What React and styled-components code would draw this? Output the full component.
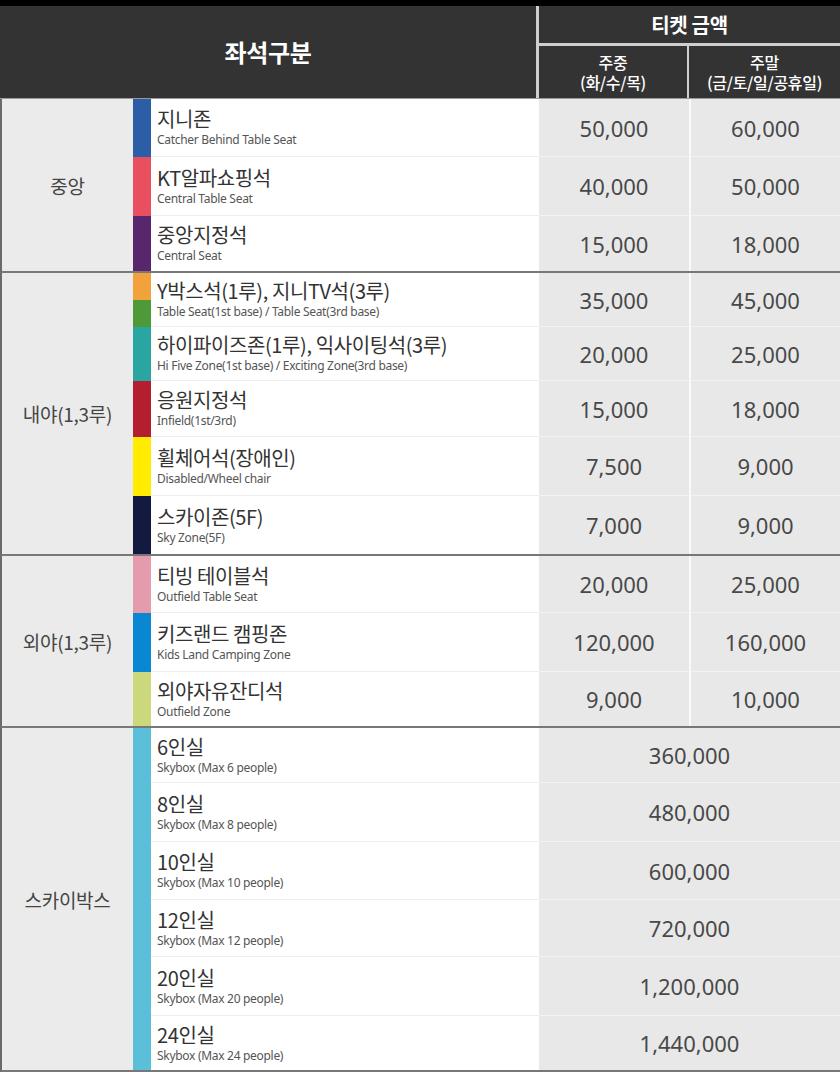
import React from 'react';
import styled, { createGlobalStyle } from 'styled-components';

const GlobalStyle = createGlobalStyle`
  html, body {
    margin: 0;
    padding: 0;
    background: #000;
  }
  body {
    font-family: "Noto Sans", "Noto Sans CJK KR", sans-serif;
  }
`;

const Page = styled.div`
  width: 840px;
  padding-top: 6px;
  background: #000;
`;

/* header */
const Header = styled.div`
  display: grid;
  grid-template-columns: 536px 1fr;
  gap: 3px;
  background: #cfcfcf;
  border-bottom: 1px solid #9a9a9a;
`;

const HeaderCell = styled.div`
  background: #333;
  color: #fff;
  display: flex;
  flex-direction: column;
  align-items: center;
  justify-content: center;
  text-align: center;
  font-family: "Noto Sans CJK KR", sans-serif;
  font-weight: ${(p) => p.weight || 700};
  font-size: ${(p) => p.size || 16}px;
  line-height: 1.2;
  letter-spacing: -0.3px;
  height: ${(p) => p.h}px;
`;

const HeadLine = styled.span`
  display: block;
  line-height: 20px;
  height: 20px;
  overflow: visible;
`;

const HeaderRight = styled.div`
  display: flex;
  flex-direction: column;
  gap: 3px;
`;

const SubHeads = styled.div`
  display: grid;
  grid-template-columns: 148px 1fr;
  gap: 2px;
`;

/* body */
const Group = styled.div`
  display: flex;
  border-left: 2px solid #6a6a6a;
  border-bottom: 2px solid #787878;
  background: #fff;
`;

const GroupLabel = styled.div`
  width: 131px;
  flex-shrink: 0;
  background: #ebebeb;
  display: flex;
  align-items: center;
  justify-content: center;
  font-family: "Noto Sans CJK KR", sans-serif;
  font-size: 19px;
  color: #444;
  letter-spacing: -0.3px;
`;

const Rows = styled.div`
  flex: 1;
  display: grid;
  grid-template-columns: 18px 388px 150px 151px;
`;

const Bar = styled.div`
  background: ${(p) => p.color};
  ${(p) => p.split && `background: linear-gradient(${p.color} 50%, ${p.split} 50%);`}
  grid-row: span ${(p) => p.span || 1};
`;

const NameCell = styled.div`
  display: flex;
  flex-direction: column;
  justify-content: center;
  padding-left: 6px;
  background: #fff;
  border-bottom: ${(p) => (p.last ? 'none' : '1px solid #eeeeee')};
  height: ${(p) => p.h}px;
  box-sizing: border-box;
`;

const Name = styled.div`
  font-family: "Noto Sans CJK KR", sans-serif;
  font-size: 20px;
  line-height: 22px;
  color: #333;
  letter-spacing: -0.4px;
`;

const Sub = styled.div`
  font-family: "Noto Sans", "Noto Sans CJK KR", sans-serif;
  font-size: 12px;
  line-height: 15px;
  color: #555;
  letter-spacing: -0.3px;
  margin-top: 2px;
`;

const Price = styled.div`
  background: #e8e8e8;
  display: flex;
  align-items: center;
  justify-content: center;
  font-family: "Noto Sans", sans-serif;
  font-size: 22px;
  color: #484848;
  border-bottom: ${(p) => (p.last ? 'none' : '1px solid #f3f3f3')};
  border-left: ${(p) => (p.divide ? '2px solid #fafafa' : 'none')};
  grid-column: span ${(p) => p.span || 1};
  box-sizing: border-box;
`;

const groups = [
  {
    label: '중앙',
    rows: [
      { h: 58, color: '#2c5ea8', name: '지니존', sub: 'Catcher Behind Table Seat', p: ['50,000', '60,000'] },
      { h: 59, color: '#e8505f', name: 'KT알파쇼핑석', sub: 'Central Table Seat', p: ['40,000', '50,000'] },
      { h: 55, color: '#57266d', name: '중앙지정석', sub: 'Central Seat', p: ['15,000', '18,000'] },
    ],
  },
  {
    label: '내야(1,3루)',
    rows: [
      { h: 54, color: '#f2a23a', split: '#4f9a38', name: 'Y박스석(1루), 지니TV석(3루)', sub: 'Table Seat(1st base) / Table Seat(3rd base)', p: ['35,000', '45,000'] },
      { h: 54, color: '#2aa6a2', name: '하이파이즈존(1루), 익사이팅석(3루)', sub: 'Hi Five Zone(1st base) / Exciting Zone(3rd base)', p: ['20,000', '25,000'] },
      { h: 56, color: '#b31f2e', name: '응원지정석', sub: 'Infield(1st/3rd)', p: ['15,000', '18,000'] },
      { h: 59, color: '#ffec00', name: '휠체어석(장애인)', sub: 'Disabled/Wheel chair', p: ['7,500', '9,000'] },
      { h: 58, color: '#121a40', name: '스카이존(5F)', sub: 'Sky Zone(5F)', p: ['7,000', '9,000'] },
    ],
  },
  {
    label: '외야(1,3루)',
    rows: [
      { h: 57, color: '#e49bae', name: '티빙 테이블석', sub: 'Outfield Table Seat', p: ['20,000', '25,000'] },
      { h: 59, color: '#0a87d2', name: '키즈랜드 캠핑존', sub: 'Kids Land Camping Zone', p: ['120,000', '160,000'] },
      { h: 54, color: '#cbd87c', name: '외야자유잔디석', sub: 'Outfield Zone', p: ['9,000', '10,000'] },
    ],
  },
  {
    label: '스카이박스',
    bar: '#5bbfda',
    rows: [
      { h: 55, name: '6인실', sub: 'Skybox (Max 6 people)', p: ['360,000'] },
      { h: 59, name: '8인실', sub: 'Skybox (Max 8 people)', p: ['480,000'] },
      { h: 58, name: '10인실', sub: 'Skybox (Max 10 people)', p: ['600,000'] },
      { h: 57, name: '12인실', sub: 'Skybox (Max 12 people)', p: ['720,000'] },
      { h: 59, name: '20인실', sub: 'Skybox (Max 20 people)', p: ['1,200,000'] },
      { h: 54, name: '24인실', sub: 'Skybox (Max 24 people)', p: ['1,440,000'] },
    ],
  },
];

function SeatGroup({ group }) {
  const count = group.rows.length;
  return (
    <Group>
      <GroupLabel>{group.label}</GroupLabel>
      <Rows>
        {group.rows.map((r, i) => {
          const last = i === count - 1;
          return (
            <React.Fragment key={r.name}>
              {group.bar
                ? i === 0 && <Bar color={group.bar} span={count} />
                : <Bar color={r.color} split={r.split} />}
              <NameCell h={r.h} last={last}>
                <Name>{r.name}</Name>
                <Sub>{r.sub}</Sub>
              </NameCell>
              {r.p.length === 1 ? (
                <Price span={2} last={last}>{r.p[0]}</Price>
              ) : (
                <>
                  <Price last={last}>{r.p[0]}</Price>
                  <Price last={last} divide>{r.p[1]}</Price>
                </>
              )}
            </React.Fragment>
          );
        })}
      </Rows>
    </Group>
  );
}

function App() {
  return (
    <Page>
      <GlobalStyle />
      <Header>
        <HeaderCell size={24} h={92}>좌석구분</HeaderCell>
        <HeaderRight>
          <HeaderCell size={20} h={37}>티켓 금액</HeaderCell>
          <SubHeads>
            <HeaderCell size={16} weight={500} h={52}>
              <HeadLine>주중</HeadLine>
              <HeadLine>(화/수/목)</HeadLine>
            </HeaderCell>
            <HeaderCell size={16} weight={500} h={52}>
              <HeadLine>주말</HeadLine>
              <HeadLine>(금/토/일/공휴일)</HeadLine>
            </HeaderCell>
          </SubHeads>
        </HeaderRight>
      </Header>
      {groups.map((g) => (
        <SeatGroup key={g.label} group={g} />
      ))}
    </Page>
  );
}

export default App;
